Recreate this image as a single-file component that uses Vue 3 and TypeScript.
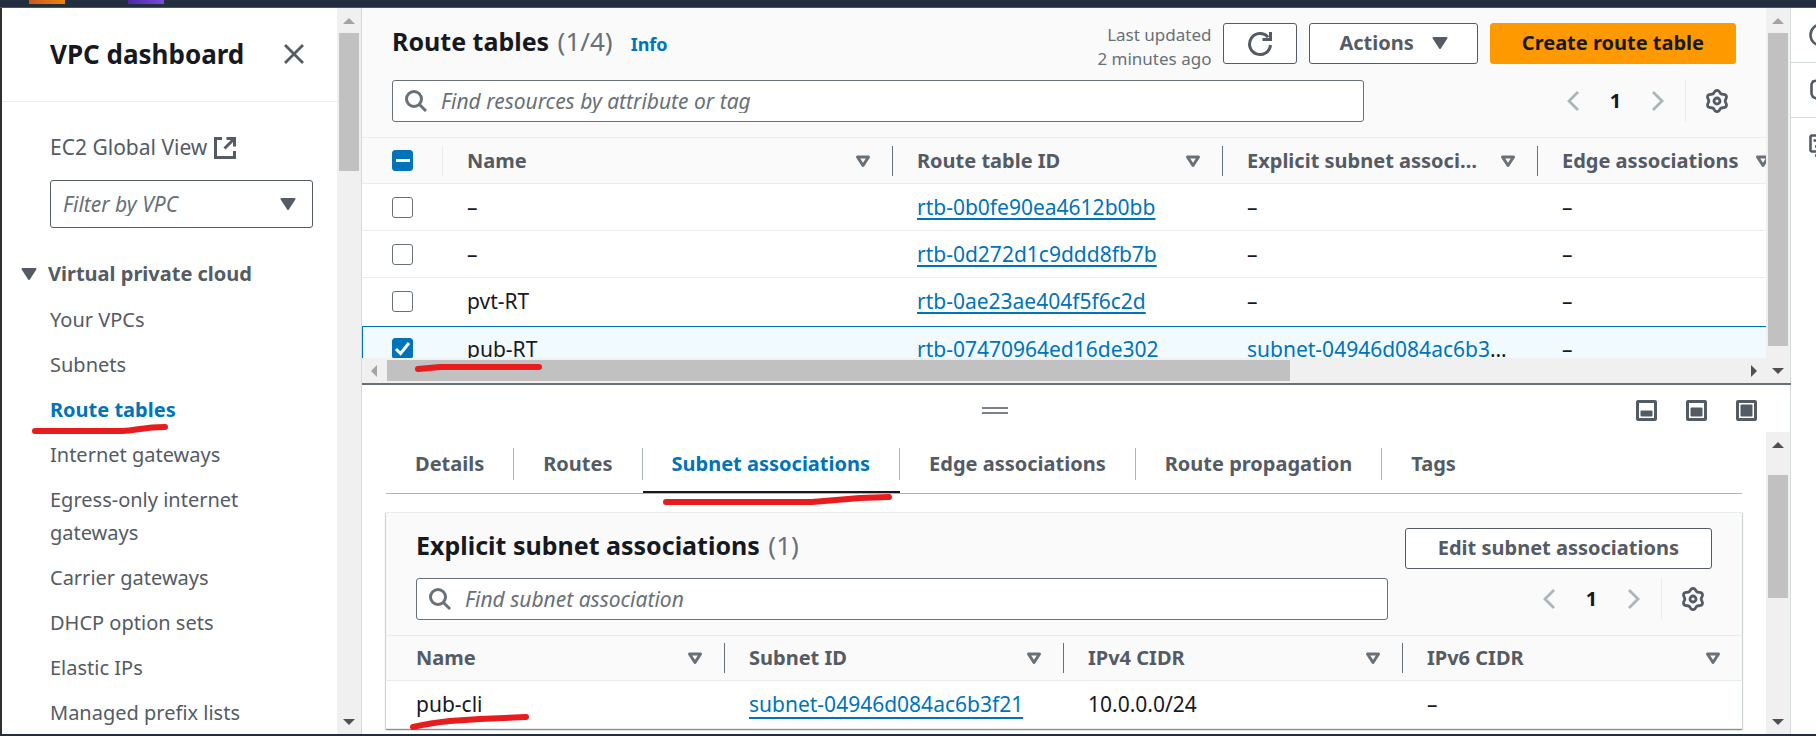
<script setup lang="ts">
import { ref } from 'vue'

interface RouteTable {
  name: string
  id: string
  subnet: string
  edge: string
}

const navLinks: string[] = [
  'Your VPCs',
  'Subnets',
  'Route tables',
  'Internet gateways',
  'Egress-only internet gateways',
  'Carrier gateways',
  'DHCP option sets',
  'Elastic IPs',
  'Managed prefix lists',
]
const currentPage = 'Route tables'

const routeTables: RouteTable[] = [
  { name: '–', id: 'rtb-0b0fe90ea4612b0bb', subnet: '', edge: '–' },
  { name: '–', id: 'rtb-0d272d1c9ddd8fb7b', subnet: '', edge: '–' },
  { name: 'pvt-RT', id: 'rtb-0ae23ae404f5f6c2d', subnet: '', edge: '–' },
  { name: 'pub-RT', id: 'rtb-07470964ed16de302', subnet: 'subnet-04946d084ac6b3f21', edge: '–' },
]
const selected = ref<string[]>(['rtb-07470964ed16de302'])

const tabs: string[] = ['Details', 'Routes', 'Subnet associations', 'Edge associations', 'Route propagation', 'Tags']
const activeTab = ref('Subnet associations')

const subnetColumns: string[] = ['Name', 'Subnet ID', 'IPv4 CIDR', 'IPv6 CIDR']

// Six-lobed cog outline, one lobe pointing straight up
const gearPath =
  'M' +
  Array.from({ length: 72 }, (_, i) => {
    const a = (i * Math.PI) / 36
    const r = 9.4 + 1.2 * Math.cos(6 * a)
    return `${(12 + r * Math.sin(a)).toFixed(2)} ${(12 - r * Math.cos(a)).toFixed(2)}`
  }).join('L') +
  'Z'
</script>

<template>
  <div class="page">
    <header class="topbar"><i class="tile orange"></i><i class="tile purple"></i></header>

    <div class="body">
      <nav class="sidebar" aria-label="VPC">
        <div class="side-content">
          <div class="side-head">
            <h2>VPC dashboard</h2>
            <button class="icon-btn" aria-label="Close navigation">
              <svg width="20" height="20" viewBox="0 0 20 20"><path d="M1 1 19 19M19 1 1 19" stroke="currentColor" stroke-width="2.800" fill="none" /></svg>
            </button>
          </div>
          <div class="side-top">
            <a href="#" class="global">EC2 Global View
              <svg width="22" height="22" viewBox="0 0 22 22" fill="none" stroke="currentColor" stroke-width="3"><path d="M8 1.500H1.500V20.500H20.500V14M12.500 1.500H20.500V9.500M20 2 10.500 11.500" /></svg>
            </a>
            <div class="select-box">
              <select aria-label="Filter by VPC"><option>Filter by VPC</option></select>
              <svg class="caret" width="16" height="12" viewBox="0 0 16 12"><path d="M1.500 1H14.500L8 11Z" fill="currentColor" stroke="currentColor" stroke-width="2" stroke-linejoin="round" /></svg>
            </div>
          </div>
          <button class="group" aria-expanded="true">
            <svg width="16" height="12" viewBox="0 0 16 12"><path d="M1.500 1H14.500L8 11Z" fill="currentColor" stroke="currentColor" stroke-width="2" stroke-linejoin="round" /></svg>
            Virtual private cloud
          </button>
          <ul>
            <li v-for="link in navLinks" :key="link"><a href="#" :class="{ current: link === currentPage }">{{ link }}</a></li>
          </ul>
        </div>
        <div class="vbar nav-bar"><i class="arrow up dim"></i><i class="thumb"></i><i class="arrow down"></i></div>
      </nav>

      <main>
        <section class="upper">
          <div class="upper-main">
            <div class="upper-content">
              <div class="toolbar">
                <div class="title-row">
                  <h1>Route tables <span>(1/4)</span></h1>
                  <a href="#" class="info">Info</a>
                  <p class="updated">Last updated<br />2 minutes ago</p>
                  <button class="btn refresh" aria-label="Refresh">
                    <svg width="26" height="26" viewBox="0 0 26 26" fill="none" stroke="currentColor" stroke-width="3"><path d="M23.500 14A10.500 10.500 0 1 1 21 6.200" /><path d="M23.500 1V8.500H15.500" /></svg>
                  </button>
                  <button class="btn actions">Actions
                    <svg width="16" height="14" viewBox="0 0 16 14"><path d="M1.500 2H14.500L8 12Z" fill="currentColor" stroke="currentColor" stroke-width="2" stroke-linejoin="round" /></svg>
                  </button>
                  <button class="btn primary">Create route table</button>
                </div>
                <div class="filter-row">
                  <label class="search">
                    <svg width="22" height="22" viewBox="0 0 22 22" fill="none" stroke="currentColor" stroke-width="3"><circle cx="9" cy="9" r="7.500" /><path d="M14.200 14.200 21 21" /></svg>
                    <input type="text" placeholder="Find resources by attribute or tag" aria-label="Find resources by attribute or tag" />
                  </label>
                  <div class="pager">
                    <button class="icon-btn chev" aria-label="Previous page"><svg width="12" height="20" viewBox="0 0 12 20"><path d="M11 1 2 10 11 19" fill="none" stroke="currentColor" stroke-width="2.800" /></svg></button>
                    <button class="icon-btn num">1</button>
                    <button class="icon-btn chev" aria-label="Next page"><svg width="12" height="20" viewBox="0 0 12 20"><path d="M1 1 10 10 1 19" fill="none" stroke="currentColor" stroke-width="2.800" /></svg></button>
                    <button class="icon-btn gear" aria-label="Preferences"><svg width="24" height="24" viewBox="0 0 24 24" fill="none" stroke="currentColor" stroke-width="2.800"><path :d="gearPath" /><circle cx="12" cy="12" r="3" /></svg></button>
                  </div>
                </div>
              </div>

              <table class="routes">
                <colgroup><col class="c-check" /><col class="c-name" /><col class="c-id" /><col class="c-subnet" /><col class="c-edge" /></colgroup>
                <thead>
                  <tr>
                    <th class="pick light"><input type="checkbox" class="mixed" aria-label="Select all" :indeterminate="true" /></th>
                    <th v-for="c in ['Name', 'Route table ID', 'Explicit subnet associations', 'Edge associations']" :key="c">
                      <div class="th"><span>{{ c }}</span><svg width="16" height="13" viewBox="0 0 16 13"><path d="M2.500 2H13.500L8 10.500Z" fill="none" stroke="currentColor" stroke-width="3" stroke-linejoin="round" /></svg></div>
                    </th>
                  </tr>
                </thead>
                <tbody>
                  <tr v-for="row in routeTables" :key="row.id" :class="{ on: selected.includes(row.id) }">
                    <td class="pick"><input v-model="selected" type="checkbox" :value="row.id" :aria-label="'Select ' + row.id" /></td>
                    <td>{{ row.name }}</td>
                    <td><a href="#" class="id">{{ row.id }}</a></td>
                    <td><div v-if="row.subnet" class="clip"><a href="#" class="id">{{ row.subnet }}</a></div><template v-else>–</template></td>
                    <td>{{ row.edge }}</td>
                  </tr>
                </tbody>
              </table>
            </div>
            <div class="hbar"><i class="arrow left dim"></i><i class="thumb"></i><i class="arrow right"></i></div>
          </div>
          <div class="vbar"><i class="arrow up dim"></i><i class="thumb"></i><i class="arrow down"></i></div>
        </section>

        <section class="split">
          <div class="split-head">
            <button class="icon-btn handle" aria-label="Resize panel"><i></i><i></i></button>
            <div class="modes">
              <button class="icon-btn" aria-label="Small panel"><svg width="21" height="21" viewBox="0 0 21 21"><rect x="1.500" y="1.500" width="18" height="18" rx=".5" fill="none" stroke="currentColor" stroke-width="3" /><rect x="4.500" y="10.500" width="12" height="6" rx="1" fill="currentColor" /></svg></button>
              <button class="icon-btn" aria-label="Medium panel"><svg width="21" height="21" viewBox="0 0 21 21"><rect x="1.500" y="1.500" width="18" height="18" rx=".5" fill="none" stroke="currentColor" stroke-width="3" /><rect x="4.500" y="7.500" width="12" height="9" rx="1" fill="currentColor" /></svg></button>
              <button class="icon-btn" aria-label="Full panel"><svg width="21" height="21" viewBox="0 0 21 21"><rect x="1.500" y="1.500" width="18" height="18" rx=".5" fill="none" stroke="currentColor" stroke-width="3" /><rect x="4.500" y="4.500" width="12" height="12" rx="1" fill="currentColor" /></svg></button>
            </div>
          </div>
          <div class="split-body">
            <div class="split-content">
              <div class="tabs" role="tablist">
                <button v-for="t in tabs" :key="t" role="tab" :aria-selected="t === activeTab" :class="{ active: t === activeTab }" @click="activeTab = t"><span>{{ t }}</span></button>
              </div>
              <div class="card">
                <div class="card-head">
                  <div class="title-row">
                    <h1>Explicit subnet associations <span>(1)</span></h1>
                    <button class="btn edit">Edit subnet associations</button>
                  </div>
                  <div class="filter-row">
                    <label class="search">
                      <svg width="22" height="22" viewBox="0 0 22 22" fill="none" stroke="currentColor" stroke-width="3"><circle cx="9" cy="9" r="7.500" /><path d="M14.200 14.200 21 21" /></svg>
                      <input type="text" placeholder="Find subnet association" aria-label="Find subnet association" />
                    </label>
                    <div class="pager">
                      <button class="icon-btn chev" aria-label="Previous page"><svg width="12" height="20" viewBox="0 0 12 20"><path d="M11 1 2 10 11 19" fill="none" stroke="currentColor" stroke-width="2.800" /></svg></button>
                      <button class="icon-btn num">1</button>
                      <button class="icon-btn chev" aria-label="Next page"><svg width="12" height="20" viewBox="0 0 12 20"><path d="M1 1 10 10 1 19" fill="none" stroke="currentColor" stroke-width="2.800" /></svg></button>
                      <button class="icon-btn gear" aria-label="Preferences"><svg width="24" height="24" viewBox="0 0 24 24" fill="none" stroke="currentColor" stroke-width="2.800"><path :d="gearPath" /><circle cx="12" cy="12" r="3" /></svg></button>
                    </div>
                  </div>
                </div>
                <table class="subnets">
                  <thead>
                    <tr>
                      <th v-for="c in subnetColumns" :key="c">
                        <div class="th"><span>{{ c }}</span><svg width="16" height="13" viewBox="0 0 16 13"><path d="M2.500 2H13.500L8 10.500Z" fill="none" stroke="currentColor" stroke-width="3" stroke-linejoin="round" /></svg></div>
                      </th>
                    </tr>
                  </thead>
                  <tbody>
                    <tr>
                      <td>pub-cli</td>
                      <td><a href="#" class="id">subnet-04946d084ac6b3f21</a></td>
                      <td>10.0.0.0/24</td>
                      <td>–</td>
                    </tr>
                  </tbody>
                </table>
              </div>
            </div>
            <div class="vbar lower-bar"><i class="arrow up"></i><i class="thumb"></i><i class="arrow down"></i></div>
          </div>
        </section>
      </main>

      <aside class="tools" aria-label="Tools">
        <button class="icon-btn" aria-label="Info"><svg width="24" height="24" viewBox="0 0 24 24" fill="none" stroke="currentColor" stroke-width="2.600"><circle cx="12" cy="12" r="10.500" /></svg></button>
        <button class="icon-btn" aria-label="Diagnostics"><svg width="24" height="24" viewBox="0 0 24 24" fill="none" stroke="currentColor" stroke-width="2.600"><path d="M12 1.500 4 3.500 2.500 6V16L4 19 12 22.500 20.500 17V7Z" /></svg></button>
        <button class="icon-btn" aria-label="CloudShell"><svg width="24" height="24" viewBox="0 0 24 24" fill="none" stroke="currentColor" stroke-width="2.600"><path d="M22 1.500H2.500L1.500 2.500V16.500L2.500 17.500H22" /><path d="M4.500 6.500H7.500M6 12.500H9M6 21.500H20" /></svg></button>
      </aside>
    </div>

    <svg class="marks" width="900" height="736" viewBox="0 0 900 736" fill="none" stroke="#e81c1c" stroke-width="6" stroke-linecap="round" stroke-linejoin="round" aria-hidden="true">
      <path d="M35 431H122C138 430 144 427 165 427" />
      <path d="M418 369 440 367H539" />
      <path d="M666 502H812L860 498 889 497" />
      <path d="M413 727Q430 723 450 721L480 719 526 717" />
    </svg>
  </div>
</template>

<style>
html,
body {
  overflow: hidden;
}
</style>

<style scoped>
.page {
  position: relative;
  display: flex;
  flex-direction: column;
  height: 100vh;
  background: #fff;
  color: #16191f;
  font: 20px/24px 'Noto Sans', 'Open Sans', sans-serif;
}
.page * {
  box-sizing: border-box;
}
h1,
h2,
p,
ul {
  margin: 0;
  padding: 0;
}
button,
input,
select {
  margin: 0;
  font: inherit;
}
svg {
  display: block;
  flex: none;
}
a {
  color: #0073bb;
  text-decoration: none;
}
.icon-btn {
  display: flex;
  align-items: center;
  justify-content: center;
  padding: 0;
  border: 0;
  background: none;
  color: #545b64;
}
.topbar {
  flex: none;
  display: flex;
  gap: 63px;
  height: 8px;
  padding-left: 29px;
  background: #232f3e;
  border-bottom: 1px solid #4a535f;
}
.tile {
  width: 36px;
  height: 4px;
}
.orange {
  background: linear-gradient(90deg, #cc5a1e, #ea8410);
}
.purple {
  background: linear-gradient(90deg, #4d2aa8, #7c4bd8);
}
.body {
  flex: 1;
  min-height: 0;
  display: flex;
  border-left: 2px solid #303030;
  border-bottom: 2px solid #232f3e;
}

/* scroll bars */
.vbar,
.hbar {
  flex: none;
  display: flex;
  align-items: center;
  background: #f0f0f0;
}
.vbar {
  flex-direction: column;
  width: 25px;
  padding: 10px 2px 9px;
  border-right: 1px solid #d5dbdb;
}
.hbar {
  height: 25px;
  padding: 0 9px;
}
.thumb {
  background: #c1c1c1;
}
.vbar .thumb {
  align-self: stretch;
  margin-top: 9px;
  height: 313px;
}
.nav-bar .thumb {
  height: 138px;
}
.lower-bar .thumb {
  margin-top: 27px;
  height: 123px;
}
.hbar .thumb {
  width: 903px;
  height: 21px;
  margin-left: 10px;
}
.arrow {
  flex: none;
  border: 0 solid transparent;
}
.up,
.down {
  border-left-width: 6px;
  border-right-width: 6px;
}
.up {
  border-bottom: 6px solid #505050;
}
.down {
  margin-top: auto;
  border-top: 6px solid #505050;
}
.left,
.right {
  border-top-width: 6px;
  border-bottom-width: 6px;
}
.left {
  border-right: 6px solid #505050;
}
.right {
  margin-left: auto;
  border-left: 6px solid #505050;
}
.up.dim {
  border-bottom-color: #a3a3a3;
}
.left.dim {
  border-right-color: #a3a3a3;
}

/* side navigation */
.sidebar {
  flex: none;
  display: flex;
  width: 360px;
  color: #545b64;
}
.side-content {
  flex: 1;
  overflow: hidden;
}
.side-head {
  display: flex;
  justify-content: space-between;
  align-items: center;
  height: 94px;
  padding: 0 33px 2px 48px;
  border-bottom: 1px solid #eaeded;
}
h2 {
  font-size: 26px;
  line-height: 32px;
  color: #16191f;
}
.side-top {
  padding: 29px 24px 0 48px;
}
.global {
  display: flex;
  align-items: center;
  gap: 7px;
  font-size: 21px;
  line-height: 33px;
  color: #545b64;
}
.select-box {
  position: relative;
  margin-top: 16px;
}
select {
  display: block;
  width: 100%;
  height: 48px;
  padding: 0 12px;
  appearance: none;
  border: 1px solid #545b64;
  border-radius: 3px;
  background: #fff;
  color: #687078;
  font-size: 21px;
  font-style: italic;
}
.caret {
  position: absolute;
  right: 17px;
  top: 18px;
  pointer-events: none;
}
.group {
  display: flex;
  align-items: center;
  gap: 11px;
  margin: 29px 0 13px 19px;
  padding: 0;
  border: 0;
  background: none;
  color: #545b64;
  font-weight: 700;
  line-height: 33px;
}
ul {
  padding: 0 48px;
  list-style: none;
}
li {
  margin-bottom: 12px;
  line-height: 33px;
}
li a {
  color: #545b64;
}
li .current {
  color: #0073bb;
  font-weight: 700;
}

/* upper pane */
main {
  flex: 1;
  min-width: 0;
  display: flex;
  flex-direction: column;
}
.upper {
  flex: none;
  display: flex;
  height: 375px;
}
.upper-main {
  flex: 1;
  min-width: 0;
  display: flex;
  flex-direction: column;
}
.upper-content {
  flex: 1;
  min-height: 0;
  overflow: hidden;
}
.toolbar {
  height: 129px;
  padding: 15px 30px 0;
  background: #fafafa;
}
.title-row {
  display: flex;
  align-items: flex-start;
  gap: 12px;
  height: 41px;
}
h1 {
  font-size: 25px;
  line-height: 36px;
}
h1 span {
  margin-left: 2px;
  color: #687078;
  font-size: 26px;
  font-weight: 400;
}
.info {
  margin-left: 6px;
  font-size: 18px;
  font-weight: 700;
  line-height: 42px;
}
.updated {
  margin-left: auto;
  color: #687078;
  font-size: 17px;
  text-align: right;
}
.btn {
  display: flex;
  align-items: center;
  justify-content: center;
  height: 41px;
  padding: 0 32px 2px;
  border: 1px solid #545b64;
  border-radius: 3px;
  background: #fff;
  color: #545b64;
  font-weight: 700;
  white-space: nowrap;
}
.refresh {
  padding: 0 23px;
}
.actions {
  gap: 18px;
  padding: 0 29px 1px;
}
.primary {
  padding: 0 31px 2px;
  border-color: #f90;
  background: #f90;
  color: #16191f;
}
.filter-row {
  display: flex;
  justify-content: space-between;
  margin-top: 16px;
}
.search {
  flex: 0 1 972px;
  display: flex;
  align-items: center;
  gap: 14px;
  height: 42px;
  padding: 0 12px;
  border: 1px solid #687078;
  border-radius: 3px;
  background: #fff;
  color: #687078;
}
.search input {
  flex: 1;
  min-width: 0;
  padding: 0;
  border: 0;
  outline: 0;
  background: none;
  font-size: 21px;
  font-style: italic;
}
.search input::placeholder {
  color: #687078;
}
.pager {
  display: flex;
}
.chev {
  width: 12px;
  color: #aab7b8;
}
.num {
  width: 73px;
  color: #16191f;
  font-weight: 700;
}
.gear {
  width: 51px;
  margin-left: 21px;
  padding-left: 12px;
  border-left: 1px solid #eaeded;
}

/* tables */
table {
  table-layout: fixed;
  border-collapse: separate;
  border-spacing: 0;
}
.routes {
  width: 100%;
  min-width: 1440px;
}
.c-check {
  width: 81px;
}
.c-name {
  width: 450px;
}
.c-id {
  width: 330px;
}
.c-subnet {
  width: 315px;
}
th {
  height: 47px;
  padding: 8px 0 7px;
  border-top: 1px solid #eaeded;
  border-bottom: 1px solid #eaeded;
  background: #fafafa;
  color: #545b64;
  text-align: left;
}
.th {
  display: flex;
  align-items: center;
  justify-content: space-between;
  height: 30px;
  padding: 0 21px 0 24px;
  border-right: 1px solid #687078;
  color: #687078;
}
.th span {
  overflow: hidden;
  margin-right: 16px;
  color: #545b64;
  text-overflow: ellipsis;
  white-space: nowrap;
}
th:last-child .th {
  border-right: 0;
}
.routes th:last-child .th {
  justify-content: flex-start;
}
td {
  height: 47px;
  padding: 0 28px 1px 24px;
  border-bottom: 1px solid #eaeded;
  font-size: 21px;
  white-space: nowrap;
}
.id {
  text-decoration: underline 2px;
  text-underline-offset: 3px;
}
.clip {
  overflow: hidden;
  text-overflow: ellipsis;
}
.pick {
  padding: 0 0 0 30px;
}
.light {
  background: linear-gradient(#eaeded, #eaeded) right center / 1px 30px no-repeat #fafafa;
}
input[type='checkbox'] {
  display: block;
  width: 21px;
  height: 21px;
  appearance: none;
  border: 1px solid #687078;
  border-radius: 3px;
  background: #fff;
}
input[type='checkbox'].mixed {
  border-color: #0073bb;
  background: linear-gradient(#fff, #fff) center / 14px 3px no-repeat #0073bb;
}
input[type='checkbox']:checked {
  border-color: #0073bb;
  background: url("data:image/svg+xml,%3Csvg xmlns='http://www.w3.org/2000/svg' viewBox='0 0 21 21'%3E%3Cpath d='M4 11 8.500 15.500 17 5' fill='none' stroke='white' stroke-width='3'/%3E%3C/svg%3E") center / 21px 21px no-repeat #0073bb;
}
tr:has(+ .on) td {
  height: 48px;
  border-bottom-color: transparent;
}
.on td {
  height: 47px;
  padding-bottom: 2px;
  border-top: 1px solid #0073bb;
  border-bottom-color: #0073bb;
  background: #f1faff;
}
.on .pick {
  padding-left: 29px;
  border-left: 1px solid #0073bb;
}
.on .id {
  text-decoration: none;
}

/* split panel */
.split {
  flex: 1;
  min-height: 0;
  display: flex;
  flex-direction: column;
  border-top: 2px solid #687078;
}
.split-head {
  flex: none;
  display: flex;
  align-items: center;
  height: 47px;
  padding: 4px 33px 0 0;
  border-right: 1px solid #d5dbdb;
}
.handle {
  flex: 1;
  flex-direction: column;
  gap: 3px;
  padding-right: 8px;
}
.handle i {
  width: 26px;
  height: 2px;
  background: #7a8188;
}
.modes {
  display: flex;
  gap: 29px;
}
.split-body {
  flex: 1;
  min-height: 0;
  display: flex;
}
.split-content {
  flex: 1;
  min-width: 0;
  overflow: hidden;
  padding: 0 24px;
}
.tabs {
  display: flex;
  height: 62px;
  padding-top: 16px;
  border-bottom: 1px solid #aab7b8;
}
.tabs button {
  padding: 0 0 13px;
  border: 0;
  background: none;
  color: #545b64;
  font-weight: 700;
}
.tabs span {
  display: block;
  height: 32px;
  padding: 0 29px;
  border-right: 1px solid #aab7b8;
  line-height: 32px;
}
.tabs button:last-child span {
  border-right: 0;
}
.tabs .active {
  box-shadow: inset 0 -2px #16191f;
  color: #0073bb;
}
.card {
  margin-top: 18px;
  border-top: 1px solid #eaeded;
  background: #fff;
  box-shadow: 0 1px 1px #001c244d, 1px 1px 1px #001c2426, -1px 1px 1px #001c2426;
}
.card-head {
  height: 122px;
  padding: 15px 30px 0;
  background: #fafafa;
}
.card h1 {
  line-height: 34px;
}
.edit {
  margin-left: auto;
}
.card .filter-row {
  margin-top: 9px;
}
.subnets {
  width: 100%;
}
.subnets th {
  height: 46px;
  padding: 7px 0;
}
.subnets td {
  height: 48px;
}
.subnets .id {
  text-underline-offset: 5px;
}
.subnets th:first-child .th,
.subnets td:first-child {
  padding-left: 30px;
}

/* tools rail */
.tools {
  flex: none;
  width: 25px;
  overflow: hidden;
}
.tools .icon-btn {
  width: 60px;
  height: 55px;
  border-bottom: 1px solid #d5dbdb;
}
.tools .icon-btn:last-child {
  border-bottom: 0;
}
.marks {
  position: absolute;
  left: 0;
  top: 0;
  pointer-events: none;
}
</style>
